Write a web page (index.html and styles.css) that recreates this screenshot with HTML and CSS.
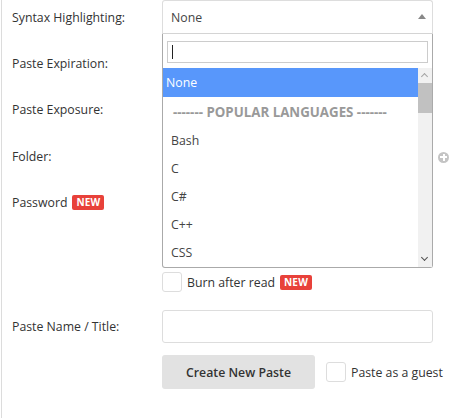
FILE: index.html
```html
<!DOCTYPE html>
<html>
<head>
<meta charset="utf-8">
<link rel="stylesheet" href="styles.css">
</head>
<body>
<div class="page">
  <div class="row r1">
    <div class="label">Syntax Highlighting:</div>
    <div class="field select open">
      <span class="sel-text">None</span>
      <span class="sel-arrow"></span>
    </div>
  </div>
  <div class="row r2">
    <div class="label">Paste Expiration:</div>
    <div class="field select"></div>
  </div>
  <div class="row r3">
    <div class="label">Paste Exposure:</div>
    <div class="field select"></div>
  </div>
  <div class="row r4">
    <div class="label">Folder:</div>
    <div class="field select"></div>
    <span class="plus"></span>
  </div>
  <div class="row r5">
    <div class="label">Password <span class="badge">NEW</span></div>
    <div class="field input"></div>
  </div>
  <div class="row r6">
    <div class="label"></div>
    <label class="check"><span class="box"></span><span>Burn after read</span> <span class="badge">NEW</span></label>
  </div>
  <div class="row r7">
    <div class="label">Paste Name / Title:</div>
    <div class="field input"></div>
  </div>
  <div class="row r8">
    <div class="label"></div>
    <div class="button">Create New Paste</div>
    <label class="check guest"><span class="box"></span><span>Paste as a guest</span></label>
  </div>

  <div class="dropdown">
    <div class="search"><span class="caret"></span></div>
    <div class="results">
      <ul class="options">
        <li class="opt first active">None</li>
        <li class="opt group">------- POPULAR LANGUAGES -------</li>
        <li class="opt">Bash</li>
        <li class="opt">C</li>
        <li class="opt">C#</li>
        <li class="opt">C++</li>
        <li class="opt">CSS</li>
      </ul>
      <div class="scrollbar">
        <span class="sb-up"></span>
        <span class="sb-thumb"></span>
        <span class="sb-track"></span>
        <span class="sb-down"></span>
      </div>
    </div>
  </div>
</div>
</body>
</html>
```
FILE: styles.css
```css
html, body {
  margin: 0;
  padding: 0;
  background: #fff;
}
body {
  font-family: "Open Sans", "Noto Sans", sans-serif;
  font-size: 12.3px;
  color: #333;
}
.page {
  position: relative;
  margin-left: 1px;
  border-left: 1px solid #dcdcdc;
  height: 418px;
  box-sizing: border-box;
}
.row {
  display: flex;
  align-items: center;
}
.label {
  width: 160px;
  padding-left: 10px;
  box-sizing: border-box;
  flex: none;
  display: flex;
  align-items: center;
  gap: 5px;
}
.r1 { height: 34px; }
.r2 { height: 34px; margin-top: 12px; }
.r3 { height: 34px; margin-top: 12px; }
.r4 { height: 34px; margin-top: 13px; }
.r5 { height: 34px; margin-top: 12px; }
.r6 { height: 20px; margin-top: 53px; }
.r7 { height: 33px; margin-top: 18px; }
.r8 { height: 34px; margin-top: 12px; }

.field {
  width: 271px;
  height: 100%;
  box-sizing: border-box;
  border: 1px solid #ddd;
  border-radius: 3px;
  background: #fff;
}
.select {
  display: flex;
  align-items: center;
  justify-content: space-between;
  padding: 0 6px 0 8px;
}
.select.open {
  border-radius: 3px 3px 0 0;
  border-bottom-color: #d4d4d4;
}
.sel-text { color: #444; }
.sel-arrow {
  width: 0;
  height: 0;
  border-left: 4px solid transparent;
  border-right: 4px solid transparent;
  border-bottom: 5px solid #888;
  margin-top: -1px;
}
.plus {
  width: 11px;
  height: 11px;
  border-radius: 50%;
  background: #c4c4c4;
  margin-left: 5px;
  position: relative;
  margin-top: 2px;
}
.plus::before, .plus::after {
  content: "";
  position: absolute;
  background: #fff;
}
.plus::before { left: 2px; right: 2px; top: 4.5px; height: 2px; }
.plus::after { top: 2px; bottom: 2px; left: 4.5px; width: 2px; }

.badge {
  display: inline-block;
  background: #e8413a;
  color: #fff;
  font-weight: 700;
  font-size: 10px;
  line-height: 15px;
  padding: 0 4px;
  border-radius: 2px;
  letter-spacing: 0.2px;
}
.check {
  display: flex;
  align-items: center;
  gap: 5px;
}
.box {
  width: 20px;
  height: 20px;
  box-sizing: border-box;
  border: 1px solid #ddd;
  border-radius: 3px;
  background: #fff;
  flex: none;
}
.button {
  width: 153px;
  height: 34px;
  box-sizing: border-box;
  background: #e2e2e2;
  border-radius: 3px;
  display: flex;
  align-items: center;
  justify-content: center;
  font-weight: 600;
  color: #333;
}
.guest { margin-left: 11px; }

.dropdown {
  position: absolute;
  left: 160px;
  top: 34px;
  width: 271px;
  height: 234px;
  box-sizing: border-box;
  border: 1px solid #aaa;
  border-top: none;
  border-radius: 0 0 3px 3px;
  background: #fff;
  padding-top: 7px;
}
.search {
  margin: 0 4px;
  height: 22px;
  box-sizing: border-box;
  border: 1px solid #ccc;
  display: flex;
  align-items: center;
  padding-left: 4px;
}
.caret {
  width: 1px;
  height: 14px;
  background: #222;
}
.results {
  display: flex;
  margin-top: 5px;
  height: 199px;
  overflow: hidden;
}
.options {
  list-style: none;
  margin: 0;
  padding: 0;
  flex: 1;
}
.opt {
  height: 28px;
  line-height: 28px;
  padding-left: 8px;
  color: #444;
  white-space: nowrap;
}
.opt.first {
  padding-left: 3px;
  height: 29px;
  line-height: 29px;
}
.opt.active {
  background: #5897fb;
  color: #fff;
}
.opt.group {
  color: #999;
  font-weight: 700;
  font-size: 13.3px;
  padding-left: 10px;
  height: 30px;
  line-height: 31px;
}
.scrollbar {
  width: 14px;
  flex: none;
  background: #f1f1f1;
  display: flex;
  flex-direction: column;
  align-items: center;
}
.sb-up, .sb-down {
  height: 15px;
  width: 14px;
  flex: none;
  position: relative;
}
.sb-up::before, .sb-down::before {
  content: "";
  position: absolute;
  left: 4px;
  width: 4px;
  height: 4px;
  border-left: 1.5px solid #a3a3a3;
  border-top: 1.5px solid #a3a3a3;
}
.sb-up::before { top: 6px; transform: rotate(45deg); }
.sb-down::before { top: 3px; transform: rotate(225deg); border-color: #505050; }
.sb-thumb {
  width: 14px;
  height: 30px;
  background: #c1c1c1;
  flex: none;
}
.sb-track { flex: 1; }
```
